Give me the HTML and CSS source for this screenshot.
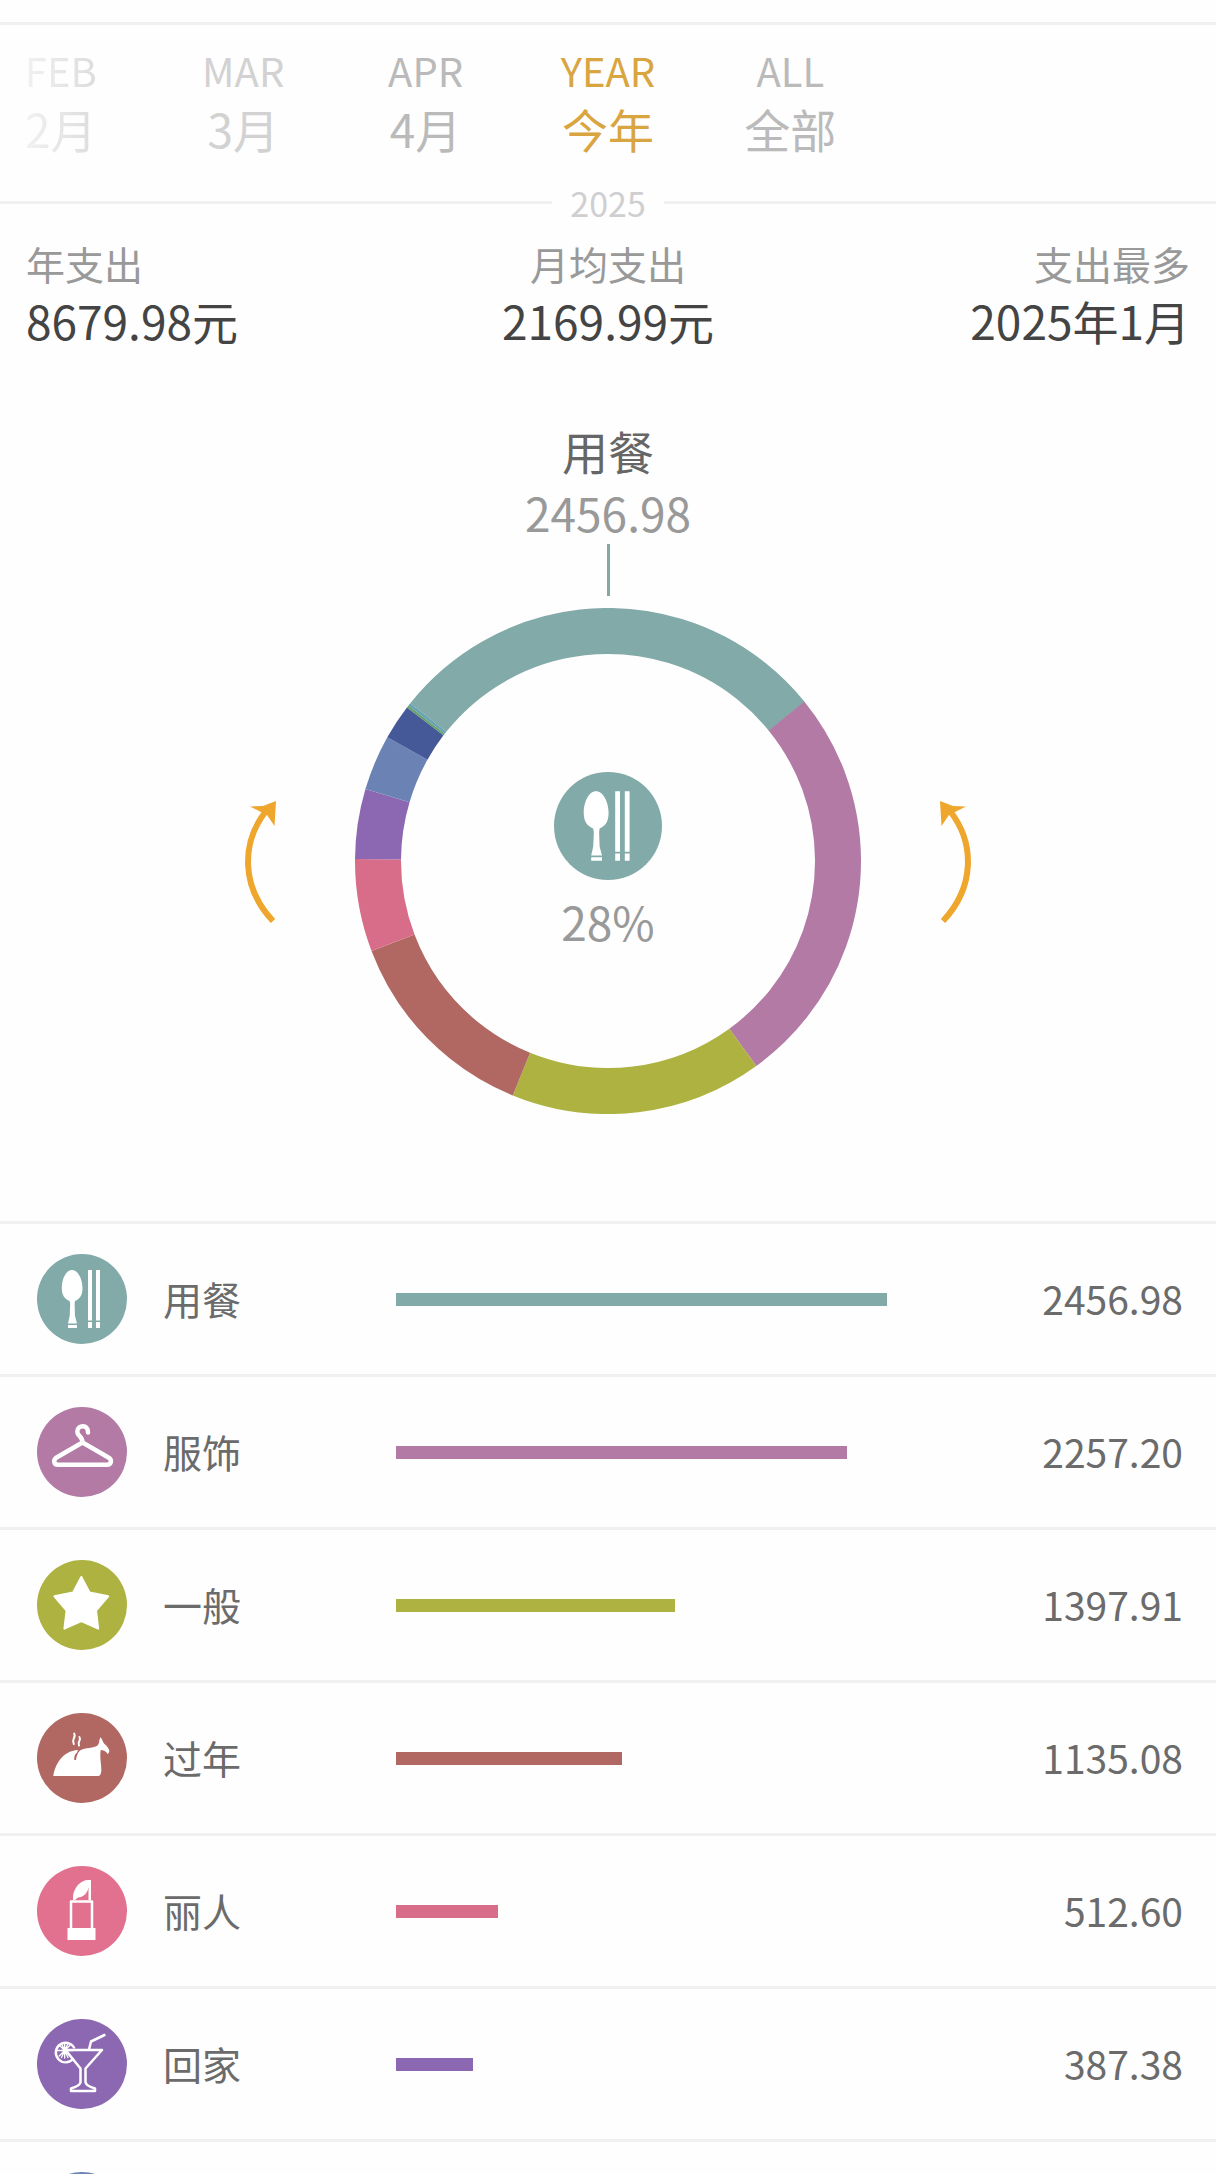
FILE: index.html
```html
<!DOCTYPE html>
<html lang="zh-CN">
<head>
<meta charset="utf-8">
<meta name="viewport" content="width=device-width, initial-scale=1">
<title>年支出</title>
<link rel="stylesheet" href="styles.css">
</head>
<body>
<svg class="sprite" aria-hidden="true">
  <symbol id="icon-meal" viewBox="0 0 90 90">
    <path d="M35 16c6 0 10.500 9 10.500 18 0 8-3 11-7.500 13l-.4 3 .4 12L40 69.500h-9l1.700-7.500.5-12-.6-3C28 45 24.800 42 24.800 34c0-9 4.200-18 10.200-18zM31 71h9v3h-9zM51 16h4v50.500h-4zM59 16h4v50.500h-4zM51 68h4v6h-4zM59 68h4v6h-4z"/>
  </symbol>
  <symbol id="icon-clothes" viewBox="0 0 90 90">
    <path class="line line-bold" d="M51 25.500C51.500 17 40.500 17.500 40.300 24.500 40.200 29.500 45.500 29 45.500 35.500L20 50.200C15.500 53 17 57.700 21 57.700H70C74.500 57.700 75.500 52.500 71 50.200L45.500 35.500"/>
  </symbol>
  <symbol id="icon-star" viewBox="0 0 90 90">
    <path class="star" d="M44.300 17 52.500 32.500 71.200 36.300 59 50.500 61.200 68.700 44.300 61.200 27.400 68.700 29.600 50.500 17.400 36.300 36.100 32.500z"/>
  </symbol>
  <symbol id="icon-feast" viewBox="0 0 90 90">
    <path d="M16.300 63C18 52 25 38 41 37L40 39.500C37.500 41.500 37 44 37.300 47L39 47C39.500 43 40.500 40 43 37.500 48 34 57 36 61 32 62.500 30 62 26 63.500 24.300 65 25.500 65.500 28.500 67 30.500 70 33 71.500 35 72.300 37.500 72.300 39 71.500 40.500 70.500 41 69 38 66.500 37 63.700 37 62.500 45 64.500 51 64.300 58 64 62 62.500 63 61 63z"/>
    <path class="line steam" d="M37.200 20.500c2.300 4-3.200 5-.4 10.500M42.400 24c2.500 3.500-2.400 4.500-.4 8.500"/>
  </symbol>
  <symbol id="icon-beauty" viewBox="0 0 90 90">
    <path d="M36 34V30C37 22 43 14 51.500 14H54V34H51.500V21C50.500 28 46 31 41 31.500L38 34zM30.500 62h28v12h-28z"/>
    <path class="line" d="M34 35.500H55V64H34z"/>
  </symbol>
  <symbol id="icon-home" viewBox="0 0 90 90">
    <path class="line" d="M52 30.500 54 22.500 67.500 16M28.500 31H65L48.500 49.500V63C48.500 66 53 68 58 69.500V72H34V69.500C39 68 43.500 66 43.500 63V49.500z"/>
    <path class="line line-lime" d="M36 40A9.800 9.800 0 1 1 37 28.500"/>
    <path class="line line-thin" d="M27.700 24V39M20 31.500H36M22.200 26 33.200 37M33.200 26 22.200 37M24.500 24.500 31 38.500M31 24.500 24.500 38.500"/>
  </symbol>
</svg>

<main class="app">
  <nav class="periods" aria-label="时间范围">
    <button class="period" type="button"><span class="period-en">FEB</span><span class="period-cn">2月</span></button>
    <button class="period" type="button"><span class="period-en">MAR</span><span class="period-cn">3月</span></button>
    <button class="period" type="button"><span class="period-en">APR</span><span class="period-cn">4月</span></button>
    <button class="period period-active" type="button" aria-current="true"><span class="period-en">YEAR</span><span class="period-cn">今年</span></button>
    <button class="period" type="button"><span class="period-en">ALL</span><span class="period-cn">全部</span></button>
  </nav>
  <div class="year-rule">2025</div>

  <dl class="summary">
    <div class="stat"><dt>年支出</dt><dd>8679.98元</dd></div>
    <div class="stat"><dt>月均支出</dt><dd>2169.99元</dd></div>
    <div class="stat"><dt>支出最多</dt><dd>2025年1月</dd></div>
  </dl>

  <section class="chart" aria-label="支出分类">
    <h1 class="chart-title">用餐</h1>
    <p class="chart-value">2456.98</p>
    <div class="pointer"></div>
    <div class="dial">
      <button class="turn" type="button" aria-label="上一个分类">
        <svg viewBox="0 0 32 124"><path class="turn-arc" d="M28 122C-4 88-4 44 21 12"/><path class="turn-head" d="M31 2 29.500 27 22 16 16 13 5 7.500 18 7z"/></svg>
      </button>
      <div class="donut">
        <svg class="ring" viewBox="0 0 506 506" aria-hidden="true">
          <g transform="rotate(-141.400 253 253)">
            <circle class="teal" cx="253" cy="253" r="230" pathLength="360" stroke-dasharray="102.400 360"/>
            <circle class="mauve" cx="253" cy="253" r="230" pathLength="360" stroke-dasharray="93.220 360" stroke-dashoffset="-102.300"/>
            <circle class="olive" cx="253" cy="253" r="230" pathLength="360" stroke-dasharray="57.980 360" stroke-dashoffset="-195.520"/>
            <circle class="brick" cx="253" cy="253" r="230" pathLength="360" stroke-dasharray="47.080 360" stroke-dashoffset="-253.500"/>
            <circle class="pink" cx="253" cy="253" r="230" pathLength="360" stroke-dasharray="21.260 360" stroke-dashoffset="-300.580"/>
            <circle class="violet" cx="253" cy="253" r="230" pathLength="360" stroke-dasharray="16.070 360" stroke-dashoffset="-321.840"/>
            <circle class="blue" cx="253" cy="253" r="230" pathLength="360" stroke-dasharray="12.740 360" stroke-dashoffset="-337.910"/>
            <circle class="navy" cx="253" cy="253" r="230" pathLength="360" stroke-dasharray="8.100 360" stroke-dashoffset="-350.650"/>
            <circle class="green" cx="253" cy="253" r="230" pathLength="360" stroke-dasharray="0.600 360" stroke-dashoffset="-358.750"/>
            <circle class="sky" cx="253" cy="253" r="230" pathLength="360" stroke-dasharray="0.650 360" stroke-dashoffset="-359.350"/>
          </g>
        </svg>
        <div class="donut-center">
          <span class="badge badge-large teal"><svg><use href="#icon-meal"/></svg></span>
          <span class="share">28%</span>
        </div>
      </div>
      <button class="turn turn-right" type="button" aria-label="下一个分类">
        <svg viewBox="0 0 32 124"><path class="turn-arc" d="M28 122C-4 88-4 44 21 12"/><path class="turn-head" d="M31 2 29.500 27 22 16 16 13 5 7.500 18 7z"/></svg>
      </button>
    </div>
  </section>

  <ul class="categories">
    <li class="category"><span class="badge teal"><svg><use href="#icon-meal"/></svg></span><span class="name">用餐</span><span class="track"><span class="bar teal" style="width:100%"></span></span><span class="amount">2456.98</span></li>
    <li class="category"><span class="badge mauve"><svg><use href="#icon-clothes"/></svg></span><span class="name">服饰</span><span class="track"><span class="bar mauve" style="width:91.9%"></span></span><span class="amount">2257.20</span></li>
    <li class="category"><span class="badge olive"><svg><use href="#icon-star"/></svg></span><span class="name">一般</span><span class="track"><span class="bar olive" style="width:56.9%"></span></span><span class="amount">1397.91</span></li>
    <li class="category"><span class="badge brick"><svg><use href="#icon-feast"/></svg></span><span class="name">过年</span><span class="track"><span class="bar brick" style="width:46.100%"></span></span><span class="amount">1135.08</span></li>
    <li class="category"><span class="badge rose"><svg><use href="#icon-beauty"/></svg></span><span class="name">丽人</span><span class="track"><span class="bar pink" style="width:20.8%"></span></span><span class="amount">512.60</span></li>
    <li class="category"><span class="badge violet"><svg><use href="#icon-home"/></svg></span><span class="name">回家</span><span class="track"><span class="bar violet" style="width:15.7%"></span></span><span class="amount">387.38</span></li>
    <li class="category"><span class="badge blue"></span></li>
  </ul>
</main>
</body>
</html>
```
FILE: styles.css
```css
:root {
  --page: #fefefe;
  --rule: #f0f0f0;
  --accent: #d9a540;
}

* {
  box-sizing: border-box;
}

body {
  margin: 0;
  background: var(--page);
  color: #6b6b6b;
  font-family: "Noto Sans CJK SC", sans-serif;
  font-size: 39px;
}

button {
  padding: 0;
  border: 0;
  background: none;
  color: inherit;
  font: inherit;
  cursor: pointer;
}

.sprite {
  display: none;
}

.app {
  display: flex;
  flex-direction: column;
  height: 100vh;
  padding-top: 22px;
  overflow: hidden;
}

.app > * {
  flex: none;
}

/* Period picker: columns run off the left edge and fade out */
.periods {
  display: grid;
  grid-template-columns: repeat(5, 15vw);
  margin-left: -2.5vw;
  padding: 21px 0 21px;
  border-top: 3px solid var(--rule);
  color: #bababa;
}

.period {
  display: flex;
  flex-direction: column;
  align-items: center;
}

.period:nth-child(1) {
  background: linear-gradient(90deg, #f4f4f4 25%, #dcdcdc 70%);
  background-clip: text;
  color: transparent;
}

.period:nth-child(2) {
  color: #d2d2d2;
}

.period-active {
  color: var(--accent);
}

.period-en {
  font-size: 40px;
  line-height: 49px;
}

.period-cn {
  font-size: 46px;
  line-height: 66px;
}

.year-rule {
  display: flex;
  align-items: center;
  gap: 18px;
  color: #cfcfd1;
  font-size: 34px;
  line-height: 41px;
}

.year-rule::before,
.year-rule::after {
  content: "";
  flex: 1;
  height: 3px;
  background: var(--rule);
}

.summary {
  display: grid;
  grid-template-columns: repeat(3, 1fr);
  margin: 0;
  padding: 16px 26px 0;
}

.stat {
  text-align: center;
}

.stat:first-child {
  text-align: left;
}

.stat:last-child {
  text-align: right;
}

.stat dt {
  color: #999;
  line-height: 48px;
}

.stat dd {
  margin: 0;
  color: #444;
  font-size: 46px;
  line-height: 66px;
}

.chart {
  display: flex;
  flex-direction: column;
  align-items: center;
  padding: 66px 0 107px;
}

.chart-title,
.chart-value {
  margin: 0;
  font-size: 46px;
  font-weight: 400;
  line-height: 62px;
}

.chart-title {
  color: #666;
}

.chart-value,
.share {
  color: #999;
}

.pointer {
  width: 3px;
  height: 52px;
  margin: 1px 0 12px;
  background: #82aaa2;
}

.dial {
  display: flex;
  align-items: center;
  justify-content: center;
  gap: 78px;
}

.turn {
  width: 32px;
  height: 124px;
}

.turn svg {
  display: block;
}

.turn-right {
  transform: scaleX(-1);
}

.turn-arc {
  fill: none;
  stroke: #eea62d;
  stroke-width: 6;
}

.turn-head {
  fill: #eea62d;
}

.donut {
  display: grid;
  width: 506px;
}

.ring,
.donut-center {
  grid-area: 1 / 1;
}

.ring circle {
  fill: none;
  stroke: var(--tone);
  stroke-width: 46;
}

.donut-center {
  display: flex;
  flex-direction: column;
  align-items: center;
  justify-content: center;
  gap: 11px;
}

.share {
  font-size: 46px;
  line-height: 60px;
}

.teal { --tone: #82aaa8; }
.mauve { --tone: #b27aa5; }
.olive { --tone: #adb240; }
.brick { --tone: #b16863; }
.pink { --tone: #d76d88; }
.rose { --tone: #e2708f; }
.violet { --tone: #8d68b2; }
.blue { --tone: #6b83b4; }
.navy { --tone: #455898; }
.green { --tone: #67a26d; }
.sky { --tone: #68a3b3; }

.badge {
  width: 90px;
  height: 90px;
  border-radius: 50%;
  background: var(--tone);
}

.badge-large {
  width: 108px;
  height: 108px;
}

.badge svg {
  display: block;
  width: 100%;
  height: 100%;
  fill: #fff;
}

.line {
  fill: none;
  stroke: #fff;
  stroke-width: 2.5;
  stroke-linecap: round;
  stroke-linejoin: round;
}

.line-bold {
  stroke-width: 4.5;
}

.line-lime {
  stroke-width: 2.4;
}

.line-thin {
  stroke-width: 1.3;
}

.steam {
  stroke-width: 2;
}

.star {
  stroke: #fff;
  stroke-width: 2;
  stroke-linejoin: round;
}

.categories {
  flex: 1 1 0;
  min-height: 0;
  margin: 0;
  padding: 0;
  overflow: hidden;
  list-style: none;
}

.category {
  display: grid;
  grid-template-columns: 90px 197px 1fr 260px;
  column-gap: 36px;
  align-items: center;
  height: 153px;
  padding: 0 33px 0 37px;
  border-top: 3px solid var(--rule);
}

.name,
.amount {
  padding-bottom: 3px;
  line-height: 56px;
}

.bar {
  display: block;
  height: 13px;
  background: var(--tone);
}

.amount {
  text-align: right;
}
```
